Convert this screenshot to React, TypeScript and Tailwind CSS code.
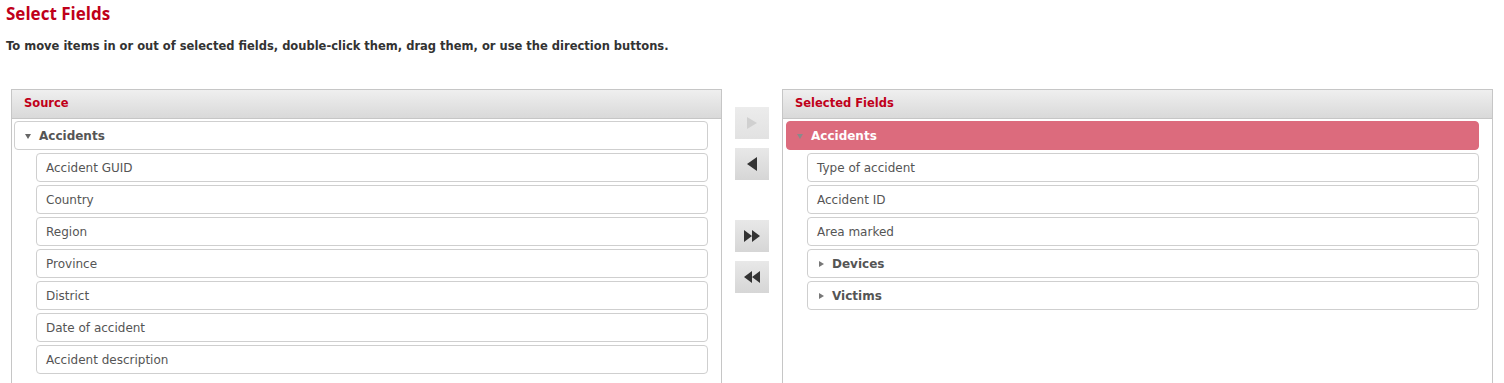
import React from 'react';

const font = { fontFamily: '"DejaVu Sans", Verdana, sans-serif' };

type Node = { label: string; open?: boolean; children?: string[] };

const source: Node = {
  label: 'Accidents',
  open: true,
  children: [
    'Accident GUID',
    'Country',
    'Region',
    'Province',
    'District',
    'Date of accident',
    'Accident description',
  ],
};

const Caret = ({ open, light }: { open: boolean; light?: boolean }) => (
  <svg width="6" height="6" viewBox="0 0 6 6" className="shrink-0">
    {open ? (
      <path d="M0 1 L6 1 L3 6 Z" fill={light ? '#8a8a8a' : '#666'} />
    ) : (
      <path d="M1 0 L6 3 L1 6 Z" fill="#777" />
    )}
  </svg>
);

const Row = ({ children, className = '' }: { children: React.ReactNode; className?: string }) => (
  <div
    className={`h-[29px] flex items-center rounded-[4px] border border-[#cfcfcf] bg-white text-[12px] text-[#555] ${className}`}
  >
    {children}
  </div>
);

const GroupRow = ({ label, open, active }: { label: string; open: boolean; active?: boolean }) => (
  <div
    className={`h-[29px] flex items-center gap-[8px] pl-[10px] rounded-[4px] border text-[12px] font-bold ${
      active ? 'bg-[#dc6b7d] border-[#dc6b7d] text-white' : 'bg-white border-[#cfcfcf] text-[#555]'
    }`}
  >
    <Caret open={open} light={active} />
    <span>{label}</span>
  </div>
);

const Panel = ({ title, children, padLeft }: { title: string; children: React.ReactNode; padLeft: string }) => (
  <div className="w-[711px] h-[320px] border border-[#c6c6c6] bg-white shrink-0">
    <div className="h-[29px] flex items-center px-[12px] border-b border-[#c6c6c6] bg-gradient-to-b from-[#efefef] to-[#d9d9d9] text-[11.5px] font-bold text-[#c0001a]">
      {title}
    </div>
    <div className={`pt-[2px] pr-[13px] flex flex-col gap-[3px] ${padLeft}`}>{children}</div>
  </div>
);

const ArrowButton = ({ children, disabled, className = '' }: { children: React.ReactNode; disabled?: boolean; className?: string }) => (
  <button
    className={`w-[34px] h-[32px] flex items-center justify-center bg-gradient-to-b ${
      disabled ? 'from-[#ececec] to-[#e2e2e2]' : 'from-[#e8e8e8] to-[#d6d6d6]'
    } ${className}`}
  >
    {children}
  </button>
);

export default function App() {
  return (
    <div className="w-[1504px] h-[383px] overflow-hidden bg-white" style={font}>
      <h1
        className="pl-[6px] pt-[2px] text-[17px] leading-[24px] font-bold text-[#c0001a]"
        style={{ fontFamily: '"Open Sans", "Noto Sans", sans-serif' }}
      >
        Select Fields
      </h1>
      <p className="pl-[6px] mt-[13px] text-[11.5px] leading-[14px] font-bold text-[#333]">
        To move items in or out of selected fields, double-click them, drag them, or use the direction buttons.
      </p>

      <div className="flex pl-[11px] mt-[36px]">
        <Panel title="Source" padLeft="pl-[2px]">
          <GroupRow label={source.label} open />
          {source.children!.map((c) => (
            <Row key={c} className="ml-[22px] pl-[9px]">
              {c}
            </Row>
          ))}
        </Panel>

        <div className="w-[60px] shrink-0 flex flex-col pl-[13px] pt-[18px]">
          <ArrowButton disabled>
            <svg width="10" height="12" viewBox="0 0 10 12"><path d="M0 0 L10 6 L0 12 Z" fill="#d0d0d0" /></svg>
          </ArrowButton>
          <ArrowButton className="mt-[9px]">
            <svg width="10" height="14" viewBox="0 0 10 14"><path d="M10 0 L0 7 L10 14 Z" fill="#333" /></svg>
          </ArrowButton>
          <ArrowButton className="mt-[40px]">
            <svg width="16" height="12" viewBox="0 0 16 12">
              <path d="M0 0 L8 6 L0 12 Z M8 0 L16 6 L8 12 Z" fill="#333" />
            </svg>
          </ArrowButton>
          <ArrowButton className="mt-[9px]">
            <svg width="16" height="12" viewBox="0 0 16 12">
              <path d="M8 0 L0 6 L8 12 Z M16 0 L8 6 L16 12 Z" fill="#333" />
            </svg>
          </ArrowButton>
        </div>

        <Panel title="Selected Fields" padLeft="pl-[3px]">
          <GroupRow label="Accidents" open active />
          {['Type of accident', 'Accident ID', 'Area marked'].map((c) => (
            <Row key={c} className="ml-[21px] pl-[9px]">
              {c}
            </Row>
          ))}
          {['Devices', 'Victims'].map((c) => (
            <div key={c} className="ml-[21px]">
              <GroupRow label={c} open={false} />
            </div>
          ))}
        </Panel>
      </div>
    </div>
  );
}
